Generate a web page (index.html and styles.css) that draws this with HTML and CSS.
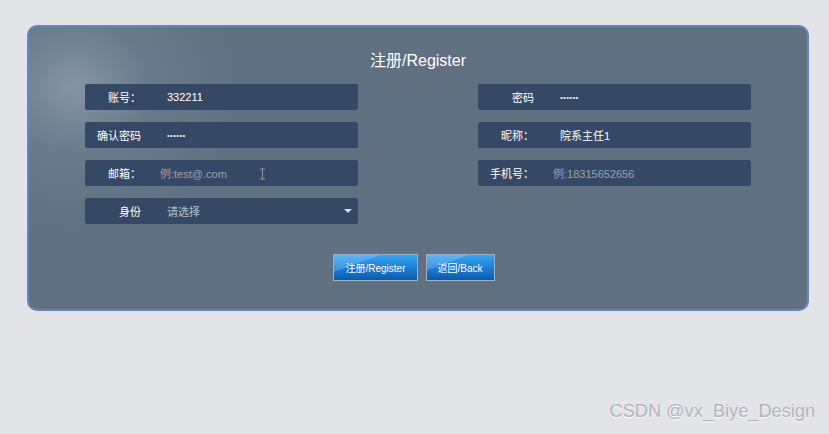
FILE: index.html
```html
<!DOCTYPE html>
<html lang="zh-CN">
<head>
  <meta charset="UTF-8">
  <meta name="viewport" content="width=device-width, initial-scale=1.0">
  <title>注册/Register</title>
  <link rel="stylesheet" href="styles.css">
</head>
<body>
  <div class="register-box">
    <h2 class="title">注册/Register</h2>

    <div class="form-grid">
      <div class="field">
        <span class="label">账号：</span>
        <span class="value">332211</span>
      </div>
      <div class="field">
        <span class="label">密码</span>
        <span class="value dots">••••••</span>
      </div>

      <div class="field">
        <span class="label">确认密码</span>
        <span class="value dots">••••••</span>
      </div>
      <div class="field">
        <span class="label">昵称：</span>
        <span class="value">院系主任1</span>
      </div>

      <div class="field">
        <span class="label">邮箱：</span>
        <span class="value placeholder">例:test@.com</span>
        <svg class="ibeam" width="7" height="12" viewBox="0 0 7 12">
          <path d="M1 1h5M3.5 1v10M1 11h5" stroke="#9a9a9a" stroke-width="1" fill="none"/>
        </svg>
      </div>
      <div class="field">
        <span class="label">手机号：</span>
        <span class="value placeholder">例:18315652656</span>
      </div>

      <div class="field select">
        <span class="label">身份</span>
        <span class="value muted">请选择</span>
        <span class="arrow"></span>
      </div>
    </div>

    <div class="button-container">
      <button class="btn">注册/Register</button>
      <button class="btn">返回/Back</button>
    </div>
  </div>

  <div class="watermark">CSDN @vx_Biye_Design</div>
</body>
</html>
```

FILE: styles.css
```css
body {
  margin: 0;
  height: 434px;
  overflow: hidden;
  background-color: #e3e4e8;
  font-family: "Liberation Sans", Arial, "Noto Sans CJK SC", sans-serif;
  position: relative;
}

.register-box {
  margin: 25px 0 0 27px;
  width: 778px;
  height: 282px;
  border: 2px solid #6686b8;
  border-radius: 10px;
  background-color: #607080;
  background-image: radial-gradient(ellipse 170px 150px at 45px 60px, rgba(160, 172, 186, 0.6) 0, rgba(130, 145, 160, 0.3) 45%, rgba(96, 112, 128, 0) 100%);
  box-sizing: content-box;
}

.title {
  margin: 0;
  padding-top: 23px;
  height: 22px;
  line-height: 22px;
  text-align: center;
  font-size: 16px;
  font-weight: normal;
  color: #fff;
}

.form-grid {
  display: grid;
  grid-template-columns: 273px 273px;
  column-gap: 120px;
  row-gap: 12px;
  justify-content: center;
  margin-top: 12px;
}

.field {
  position: relative;
  display: flex;
  align-items: center;
  height: 26px;
  background-color: #354865;
  border-radius: 2px;
  font-size: 11px;
  color: #fff;
}

.label {
  width: 56px;
  text-align: right;
  flex-shrink: 0;
}

.value {
  margin-left: 26px;
}

.value.dots {
  font-size: 8px;
  letter-spacing: 0.3px;
  color: #e8ebf0;
}

.value.placeholder {
  margin-left: 19px;
  color: #9aa3b2;
}

.value.muted {
  color: #b8c0cc;
}

.ibeam {
  position: absolute;
  left: 174px;
  top: 8px;
}

.arrow {
  position: absolute;
  right: 6px;
  top: 11px;
  width: 0;
  height: 0;
  border-left: 4px solid transparent;
  border-right: 4px solid transparent;
  border-top: 4px solid #d8dde6;
}

.button-container {
  display: flex;
  justify-content: center;
  gap: 8px;
  margin-top: 30px;
  padding-right: 8px;
}

.btn {
  height: 27px;
  padding: 0 11px;
  border: 1px solid #9ab0c8;
  background-color: #1a78d0;
  background-image: linear-gradient(160deg, rgba(255,255,255,0.18) 0, rgba(255,255,255,0.18) 30%, rgba(255,255,255,0) 31%), linear-gradient(#3aa4f0 0, #1c80d8 50%, #0b5aa6 100%);
  color: #fff;
  font-family: "Liberation Sans", Arial, "Noto Sans CJK SC", sans-serif;
  font-size: 10px;
  cursor: pointer;
}

.watermark {
  position: absolute;
  right: 14px;
  top: 401px;
  font-size: 18.2px;
  color: #b3b4ba;
  text-shadow: 0 1px 0 #fbfbfb;
}
```
